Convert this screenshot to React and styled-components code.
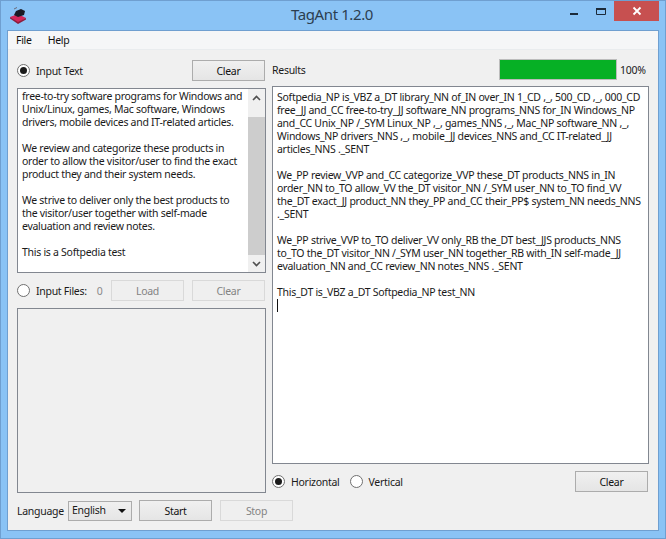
import React from "react";
import styled, { createGlobalStyle } from "styled-components";

const GlobalStyle = createGlobalStyle`
  html, body {
    margin: 0;
    padding: 0;
    background: #8ac3f5;
  }
  body {
    font-family: "Noto Sans", "Open Sans", sans-serif;
    font-size: 10.5px;
    letter-spacing: -0.28px;
    color: #1a1a1a;
  }
`;

const Frame = styled.div`
  width: 666px;
  height: 539px;
  display: flex;
  flex-direction: column;
  background: #8ac3f5;
  box-sizing: border-box;
  border: 1px solid #6f9fd0;
  overflow: hidden;
`;

const TitleBar = styled.div`
  height: 29px;
  flex: none;
  box-sizing: border-box;
  position: relative;
  display: flex;
  align-items: center;
  justify-content: center;
  padding: 0 2px 3px 0;
`;

const AppIcon = styled.svg`
  position: absolute;
  left: 8px;
  top: 6px;
`;

const AppTitle = styled.div`
  font-size: 15px;
  letter-spacing: -0.4px;
  color: #2c3e50;
`;

const WindowButtons = styled.div`
  position: absolute;
  right: 6px;
  top: 0;
  display: flex;
  align-items: flex-start;
`;

const WindowButton = styled.div`
  width: ${(p) => p.$w}px;
  height: 20px;
  display: flex;
  align-items: center;
  justify-content: center;
  background: ${(p) => (p.$close ? "#c75050" : "transparent")};
`;

const Client = styled.div`
  margin: 0 6px 7px;
  flex: 1;
  display: flex;
  flex-direction: column;
  background: #f0f0f0;
  border: 1px solid #6f9fd0;
  min-height: 0;
`;

const MenuBar = styled.div`
  height: 18px;
  flex: none;
  display: flex;
  align-items: center;
  gap: 16px;
  padding-left: 8px;
  background: #f5f6f7;
  border-bottom: 1px solid #e9ecee;
`;

const MenuItem = styled.span`
  color: #111;
`;

const Columns = styled.div`
  display: flex;
  gap: 6px;
  padding: 10px 9px 0;
`;

const LeftColumn = styled.div`
  width: 249px;
  display: flex;
  flex-direction: column;
`;

const RightColumn = styled.div`
  width: 377px;
  display: flex;
  flex-direction: column;
`;

const Row = styled.div`
  display: flex;
  align-items: center;
  height: 21px;
`;

const InputRow = styled(Row)`
  padding-right: 1px;
  margin-top: ${(p) => p.$mt || 0}px;
`;

const ResultsHeader = styled(Row)`
  margin-top: -1px;
`;

const Spacer = styled.div`
  flex: 1;
`;

const RadioLabel = styled.label`
  display: flex;
  align-items: center;
  gap: 6px;
  white-space: nowrap;
  margin-right: ${(p) => p.$mr || 0}px;
`;

const RadioCircle = styled.span`
  width: 13px;
  height: 13px;
  flex: none;
  box-sizing: border-box;
  border-radius: 50%;
  border: 1px solid #707070;
  background: #fff;
  display: flex;
  align-items: center;
  justify-content: center;

  &::after {
    content: "";
    display: ${(p) => (p.$on ? "block" : "none")};
    width: 7px;
    height: 7px;
    border-radius: 50%;
    background: #1c1c1c;
  }
`;

const Button = styled.button`
  width: 73px;
  height: 21px;
  flex: none;
  box-sizing: border-box;
  padding: 0;
  margin-left: ${(p) => p.$ml || 0}px;
  font: inherit;
  letter-spacing: inherit;
  color: ${(p) => (p.disabled ? "#838383" : "#111")};
  border: 1px solid ${(p) => (p.disabled ? "#d9d9d9" : "#acacac")};
  background: ${(p) =>
    p.disabled ? "#efefef" : "linear-gradient(#f0f0f0, #e5e5e5)"};
`;

const TextPanel = styled.div`
  height: 185px;
  margin-top: 7px;
  box-sizing: border-box;
  border: 1px solid #828790;
  background: #fff;
  display: flex;
  overflow: hidden;
`;

const InputLines = styled.div`
  flex: 1;
  min-width: 0;
  padding-left: 4px;
  margin-top: 1px;
  line-height: 13px;
  white-space: pre;
  overflow: hidden;
`;

const ScrollBar = styled.div`
  width: 17px;
  flex: none;
  background: #f0f0f0;
  display: flex;
  flex-direction: column;
  align-items: center;
`;

const ScrollArrow = styled.div`
  height: 17px;
  flex: none;
  display: flex;
  align-items: center;
  justify-content: center;
`;

const ScrollTrack = styled.div`
  flex: 1;
  width: 100%;
  padding-top: 11px;
  box-sizing: border-box;
  display: flex;
`;

const ScrollThumb = styled.div`
  width: 100%;
  height: 138px;
  background: #cdcdcd;
`;

const FilesCount = styled.span`
  color: #8a8a8a;
  margin-left: 10px;
`;

const ListPanel = styled.div`
  height: 185px;
  margin-top: 7px;
  box-sizing: border-box;
  border: 1px solid #828790;
  background: #f0f0f0;
`;

const ProgressTrack = styled.div`
  width: 118px;
  height: 21px;
  box-sizing: border-box;
  border: 1px solid #bcbcbc;
  background: #e6e6e6;
`;

const ProgressFill = styled.div`
  height: 100%;
  background: #06b025;
`;

const Percent = styled.span`
  width: 32px;
  padding-left: 3px;
  box-sizing: border-box;
`;

const ResultsPanel = styled.div`
  height: 378px;
  margin-top: 6px;
  box-sizing: border-box;
  border: 1px solid #828790;
  background: #fff;
  padding: 4px 0 0 4px;
  line-height: 13px;
  white-space: pre;
  overflow: hidden;
`;

const Caret = styled.div`
  width: 1px;
  height: 13px;
  background: #111;
`;

const OrientationRow = styled(Row)`
  margin-top: 7px;
  padding-right: 1px;
`;

const Footer = styled.div`
  display: flex;
  align-items: center;
  height: 21px;
  margin-top: 7px;
  padding-left: 9px;
`;

const FooterLabel = styled.span`
  width: 51px;
  flex: none;
`;

const Select = styled.div`
  width: 64px;
  height: 20px;
  flex: none;
  box-sizing: border-box;
  border: 1px solid #acacac;
  background: linear-gradient(#f0f0f0, #e5e5e5);
  display: flex;
  align-items: center;
  justify-content: space-between;
  padding: 0 5px 2px 3px;
  margin-right: 7px;
`;

const SelectArrow = styled.span`
  width: 0;
  height: 0;
  margin-top: 2px;
  border-left: 4px solid transparent;
  border-right: 4px solid transparent;
  border-top: 4px solid #111;
`;

const inputText = `free-to-try software programs for Windows and
Unix/Linux, games, Mac software, Windows
drivers, mobile devices and IT-related articles.

We review and categorize these products in
order to allow the visitor/user to find the exact
product they and their system needs.

We strive to deliver only the best products to
the visitor/user together with self-made
evaluation and review notes.

This is a Softpedia test`;

const resultText = `Softpedia_NP is_VBZ a_DT library_NN of_IN over_IN 1_CD ,_, 500_CD ,_, 000_CD
free_JJ and_CC free-to-try_JJ software_NN programs_NNS for_IN Windows_NP
and_CC Unix_NP /_SYM Linux_NP ,_, games_NNS ,_, Mac_NP software_NN ,_,
Windows_NP drivers_NNS ,_, mobile_JJ devices_NNS and_CC IT-related_JJ
articles_NNS ._SENT

We_PP review_VVP and_CC categorize_VVP these_DT products_NNS in_IN
order_NN to_TO allow_VV the_DT visitor_NN /_SYM user_NN to_TO find_VV
the_DT exact_JJ product_NN they_PP and_CC their_PP$ system_NN needs_NNS
._SENT

We_PP strive_VVP to_TO deliver_VV only_RB the_DT best_JJS products_NNS
to_TO the_DT visitor_NN /_SYM user_NN together_RB with_IN self-made_JJ
evaluation_NN and_CC review_NN notes_NNS ._SENT

This_DT is_VBZ a_DT Softpedia_NP test_NN`;

const App = () => (
  <>
    <GlobalStyle />
    <Frame>
      <TitleBar>
        <AppIcon width="18" height="18" viewBox="0 0 18 18">
          <path d="M1 10 L9 7 L17 11 L9 16 Z" fill="#d3265a" />
          <path d="M1 10 L9 15 L17 11 L17 12.5 L9 17 L1 11.5 Z" fill="#8e1c3c" />
          <path d="M5 8 L7 4 L12 2 L16 4 L15 8 L9 10 Z" fill="#1a1a24" />
          <path d="M5 2 L8 0.5" stroke="#6a6a78" strokeWidth="1" />
        </AppIcon>
        <AppTitle>TagAnt 1.2.0</AppTitle>
        <WindowButtons>
          <WindowButton $w={27}>
            <svg width="10" height="10" viewBox="0 0 10 10">
              <rect x="1" y="7" width="8" height="2" fill="#1c2b3a" />
            </svg>
          </WindowButton>
          <WindowButton $w={27}>
            <svg width="10" height="10" viewBox="0 0 10 10">
              <path d="M0.5 2.5H9.5V8.5H0.5Z" fill="none" stroke="#1c2b3a" />
              <rect x="0" y="2" width="10" height="2" fill="#1c2b3a" />
            </svg>
          </WindowButton>
          <WindowButton $w={45} $close>
            <svg width="10" height="10" viewBox="0 0 10 10">
              <path d="M1.5 1.5L8.5 8.5M8.5 1.5L1.5 8.5" stroke="#fff" strokeWidth="1.8" />
            </svg>
          </WindowButton>
        </WindowButtons>
      </TitleBar>
      <Client>
        <MenuBar>
          <MenuItem>File</MenuItem>
          <MenuItem>Help</MenuItem>
        </MenuBar>
        <Columns>
          <LeftColumn>
            <InputRow>
              <RadioLabel>
                <RadioCircle $on />
                Input Text
              </RadioLabel>
              <Spacer />
              <Button>Clear</Button>
            </InputRow>
            <TextPanel>
              <InputLines>{inputText}</InputLines>
              <ScrollBar>
                <ScrollArrow>
                  <svg width="9" height="6" viewBox="0 0 9 6">
                    <path d="M1 5L4.5 1.5L8 5" fill="none" stroke="#505050" strokeWidth="1.6" />
                  </svg>
                </ScrollArrow>
                <ScrollTrack>
                  <ScrollThumb />
                </ScrollTrack>
                <ScrollArrow>
                  <svg width="9" height="6" viewBox="0 0 9 6">
                    <path d="M1 1L4.5 4.5L8 1" fill="none" stroke="#505050" strokeWidth="1.6" />
                  </svg>
                </ScrollArrow>
              </ScrollBar>
            </TextPanel>
            <InputRow $mt={7}>
              <RadioLabel>
                <RadioCircle />
                Input Files:
              </RadioLabel>
              <FilesCount>0</FilesCount>
              <Spacer />
              <Button disabled>Load</Button>
              <Button disabled $ml={8}>Clear</Button>
            </InputRow>
            <ListPanel />
          </LeftColumn>
          <RightColumn>
            <ResultsHeader>
              <span>Results</span>
              <Spacer />
              <ProgressTrack>
                <ProgressFill style={{ width: "100%" }} />
              </ProgressTrack>
              <Percent>100%</Percent>
            </ResultsHeader>
            <ResultsPanel>
              {resultText}
              <Caret />
            </ResultsPanel>
            <OrientationRow>
              <RadioLabel $mr={10}>
                <RadioCircle $on />
                Horizontal
              </RadioLabel>
              <RadioLabel>
                <RadioCircle />
                Vertical
              </RadioLabel>
              <Spacer />
              <Button>Clear</Button>
            </OrientationRow>
          </RightColumn>
        </Columns>
        <Footer>
          <FooterLabel>Language</FooterLabel>
          <Select>
            English
            <SelectArrow />
          </Select>
          <Button>Start</Button>
          <Button disabled $ml={8}>Stop</Button>
        </Footer>
      </Client>
    </Frame>
  </>
);

export default App;
